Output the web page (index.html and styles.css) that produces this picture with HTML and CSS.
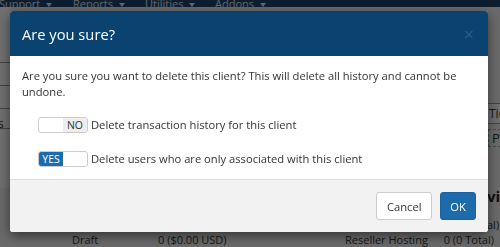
FILE: index.html
```html
<!DOCTYPE html>
<html lang="en">
    <head>
        <meta charset="UTF-8" />
        <meta name="viewport" content="width=device-width, initial-scale=1.0" />
        <title>Delete Client</title>
        <link rel="stylesheet" href="styles.css">
    </head>
    <body>
        <div class="page">
            <div class="navbar">
                <span class="nav-item">Support <span class="caret"></span></span>
                <span class="nav-item">Reports <span class="caret"></span></span>
                <span class="nav-item">Utilities <span class="caret"></span></span>
                <span class="nav-item">Addons <span class="caret"></span></span>
            </div>
            <div class="content">
                <div class="sidebar">
                    <div class="side-row"></div>
                    <div class="side-row"></div>
                    <div class="side-row short">s</div>
                    <div class="side-row"></div>
                </div>
                <div class="main"></div>
                <div class="aside">
                    <div class="aside-cell">Tickets</div>
                    <div class="aside-box">Products</div>
                    <div class="aside-title">vices</div>
                    <div class="aside-line">al)</div>
                </div>
            </div>
            <div class="bottom-row">
                <span class="cell-name">Draft</span>
                <span class="cell-value">0 ($0.00 USD)</span>
                <span class="cell-wide">Reseller Hosting</span>
                <span class="cell-right">0 (0 Total)</span>
            </div>
        </div>

        <div class="backdrop"></div>

        <div class="modal">
            <div class="modal-header">
                <h4 class="modal-title">Are you sure?</h4>
                <span class="close">&times;</span>
            </div>
            <div class="modal-body">
                <p>Are you sure you want to delete this client? This will delete all history and cannot be undone.</p>
                <div class="option">
                    <div class="switch">
                        <span class="switch-blank"></span>
                        <span class="switch-off">NO</span>
                    </div>
                    <span class="option-label">Delete transaction history for this client</span>
                </div>
                <div class="option">
                    <div class="switch">
                        <span class="switch-on">YES</span>
                        <span class="switch-blank"></span>
                    </div>
                    <span class="option-label">Delete users who are only associated with this client</span>
                </div>
            </div>
            <div class="modal-footer">
                <button class="btn btn-default">Cancel</button>
                <button class="btn btn-primary">OK</button>
            </div>
        </div>
    </body>
</html>
```

FILE: styles.css
```css
body {
    margin: 0;
    font-family: "Open Sans", Arial, sans-serif;
    background-color: #fff;
    color: #333;
    overflow: hidden;
}
.page {
    height: 247px;
    display: flex;
    flex-direction: column;
}
.navbar {
    height: 12px;
    background-color: #1f4570;
    display: flex;
    font-size: 11px;
    line-height: 11px;
    color: #e0e6ee;
    overflow: hidden;
}
.nav-item {
    white-space: nowrap;
    width: 72px;
    margin-top: -2px;
}
.nav-item:first-child {
    margin-left: -1px;
    width: 74px;
}
.nav-item:nth-child(3) {
    width: 70px;
}
.caret {
    display: inline-block;
    width: 0;
    height: 0;
    border-top: 4px solid #e0e6ee;
    border-left: 3.5px solid transparent;
    border-right: 3.5px solid transparent;
    vertical-align: middle;
    margin-left: 3px;
}
.content {
    flex: 1;
    display: flex;
    background-color: #f2f2f2;
}
.sidebar {
    width: 10px;
    background-color: #fff;
    padding-top: 55px;
    font-size: 12px;
    overflow: hidden;
    margin-bottom: 44px;
}
.side-row {
    height: 22px;
    border-top: 1px solid #9a9a9a;
}
.side-row.short {
    height: 19px;
    line-height: 30px;
    text-indent: -2px;
}
.main {
    flex: 1;
}
.aside {
    width: 12px;
    overflow: hidden;
    white-space: nowrap;
    padding-top: 96px;
    font-size: 12px;
    color: #333;
}
.aside-cell {
    width: 60px;
    height: 19px;
    line-height: 19px;
    border-top: 1px solid #999;
    border-bottom: 1px solid #999;
    background-color: #fafafa;
    padding-left: 1px;
}
.aside-box {
    width: 60px;
    margin-top: 5px;
    height: 16px;
    line-height: 16px;
    border: 1px dashed #8aa;
    border-right: none;
    padding-left: 3px;
    font-size: 13px;
}
.aside-title {
    margin-top: 40px;
    font-size: 15px;
    line-height: 18px;
    font-weight: 700;
    color: #222;
    text-indent: -1px;
}
.aside-line {
    margin-top: 13px;
    font-size: 11px;
    line-height: 14px;
    text-indent: -1px;
}
.bottom-row {
    display: flex;
    font-size: 11px;
    color: #333;
    background-color: #f2f2f2;
    padding: 0 6px 0 72px;
    height: 16px;
}
.cell-name {
    width: 86px;
}
.cell-value {
    width: 187px;
}
.cell-wide {
    flex: 1;
}
.cell-right {
    text-align: right;
}
.backdrop {
    position: fixed;
    inset: 0;
    background-color: rgba(0, 0, 0, 0.56);
}
.modal {
    position: absolute;
    top: 11px;
    left: 10px;
    width: 478px;
    background-color: #fff;
    border-radius: 3px;
    box-shadow: 0 4px 12px rgba(0, 0, 0, 0.5);
    overflow: hidden;
    font-size: 11.2px;
}
.modal-header {
    height: 45px;
    background-color: #0a4270;
    display: flex;
    align-items: center;
    justify-content: space-between;
    padding: 0 12px;
}
.modal-title {
    margin: 0;
    font-size: 14.7px;
    font-weight: 400;
    color: #fff;
}
.close {
    color: #2a5f8e;
    font-size: 18px;
    line-height: 1;
    margin-right: 2px;
}
.modal-body {
    padding: 12px 12px 12px;
    line-height: 16px;
}
.modal-body p {
    margin: 0 0 17px;
}
.option {
    display: flex;
    align-items: center;
    gap: 3px;
    padding-left: 16px;
    margin-bottom: 18px;
}
.option:last-child {
    margin-bottom: 0;
}
.switch {
    display: flex;
    width: 48px;
    height: 14px;
    border: 1px solid #ccc;
    border-radius: 3px;
    overflow: hidden;
    font-size: 10.5px;
    line-height: 14px;
}
.switch span {
    flex: 1;
    text-align: center;
}
.switch-off {
    background-color: #eee;
    color: #333;
}
.switch-on {
    background-color: #1d6bab;
    color: #fff;
}
.modal-footer {
    background-color: #f2f2f2;
    border-top: 1px solid #ddd;
    padding: 12px;
    display: flex;
    justify-content: flex-end;
    gap: 8px;
}
.btn {
    font-family: "Open Sans", Arial, sans-serif;
    font-size: 11.2px;
    height: 28px;
    border-radius: 3px;
    padding: 0 10px;
    cursor: pointer;
}
.btn-default {
    background-color: #fff;
    border: 1px solid #ccc;
    color: #333;
    width: 56px;
}
.btn-primary {
    background-color: #1d6bab;
    border: 1px solid #1a63a0;
    color: #fff;
    width: 36px;
    padding: 0;
}
```
